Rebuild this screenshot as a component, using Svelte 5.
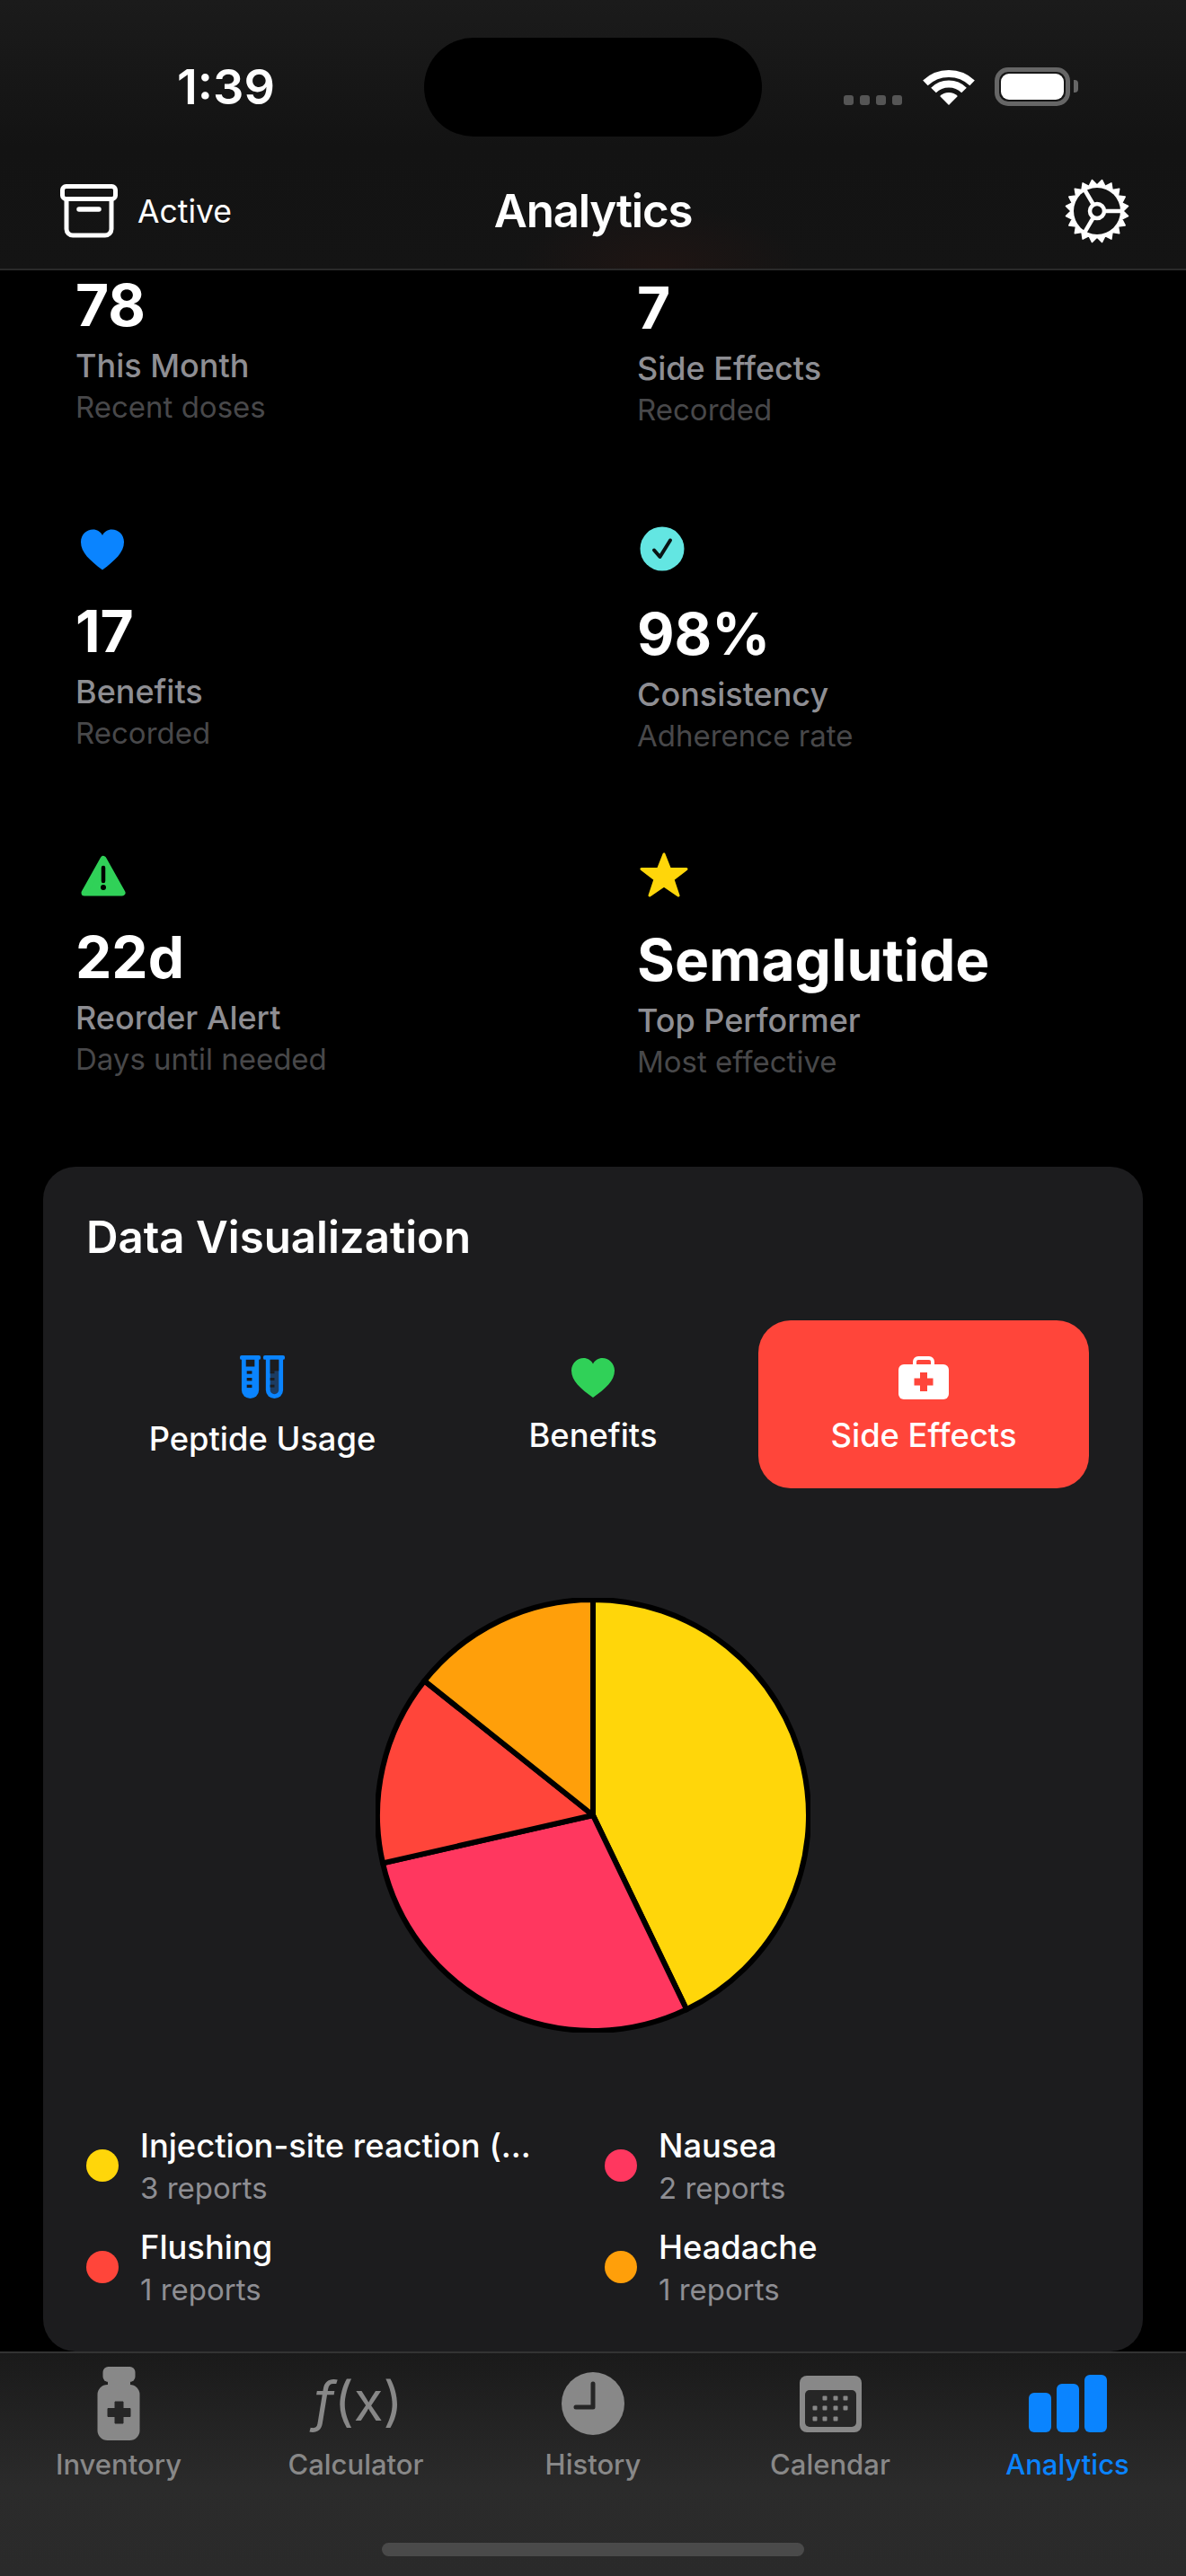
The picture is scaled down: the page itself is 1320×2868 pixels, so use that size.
<script>
  const cx = 242, cy = 242, r = 240;
  const slices = [
    { name: 'Injection-site reaction (...', count: 3, color: '#ffd60a' },
    { name: 'Nausea', count: 2, color: '#ff375f' },
    { name: 'Flushing', count: 1, color: '#ff453a' },
    { name: 'Headache', count: 1, color: '#ff9f0a' }
  ];
  const total = slices.reduce((a, s) => a + s.count, 0);
  let acc = 0;
  const arcs = slices.map((s) => {
    const a0 = (acc / total) * Math.PI * 2;
    acc += s.count;
    const a1 = (acc / total) * Math.PI * 2;
    const p = (a) => `${(cx + r * Math.sin(a)).toFixed(2)} ${(cy - r * Math.cos(a)).toFixed(2)}`;
    const large = a1 - a0 > Math.PI ? 1 : 0;
    return { color: s.color, d: `M${cx} ${cy}L${p(a0)}A${r} ${r} 0 ${large} 1 ${p(a1)}Z` };
  });

  const gearPts = [];
  const teeth = 20;
  for (let i = 0; i < teeth * 2; i++) {
    const rad = i % 2 ? 29 : 35;
    const a = (i / (teeth * 2)) * Math.PI * 2 + Math.PI / teeth;
    gearPts.push(`${(36 + rad * Math.cos(a)).toFixed(2)},${(36 + rad * Math.sin(a)).toFixed(2)}`);
  }
  const gear = gearPts.join(' ');

  const stats = [
    { icon: 'none', value: '78', label: 'This Month', sub: 'Recent doses' },
    { icon: 'none', value: '7', label: 'Side Effects', sub: 'Recorded', right: true },
    { icon: 'heart', value: '17', label: 'Benefits', sub: 'Recorded' },
    { icon: 'check', value: '98%', label: 'Consistency', sub: 'Adherence rate', right: true },
    { icon: 'warn', value: '22d', label: 'Reorder Alert', sub: 'Days until needed' },
    { icon: 'star', value: 'Semaglutide', label: 'Top Performer', sub: 'Most effective', right: true }
  ];
  const dotRows = [
    [917, 929, 940].map((x) => [x - 889, 25]),
    [906, 917, 929, 940].map((x) => [x - 889, 36]),
    [906, 917, 929].map((x) => [x - 889, 48])
  ].flat();
</script>

<div class="phone">
  <header class="top">
    <div class="status">
      <span class="time">1:39</span>
      <div class="island"></div>
      <div class="sys">
        <div class="signal"><i></i><i></i><i></i><i></i></div>
        <svg class="wifi" width="58" height="42" viewBox="0 0 58 42" aria-hidden="true">
          <g fill="none" stroke="#fff" stroke-width="8">
            <path d="M2.9 16.9A38 38 0 0 1 55.1 16.9" transform="translate(0 .5)" />
            <path d="M12 25.5A24 24 0 0 1 46 25.5" />
          </g>
          <path d="M19.1 32.1A14 14 0 0 1 38.9 32.1L29 42Z" fill="#fff" />
        </svg>
        <div class="battery"><div class="cell"></div></div>
        <div class="nub"></div>
      </div>
    </div>
    <div class="nav">
      <div class="nav-left">
        <svg width="66" height="60" viewBox="0 0 66 60" aria-hidden="true">
          <g fill="none" stroke="#fff" stroke-width="5" stroke-linecap="round" stroke-linejoin="round">
            <rect x="3.5" y="2.5" width="59" height="14" rx="4" />
            <path d="M8 17V50a7 7 0 0 0 7 7H51a7 7 0 0 0 7-7V17" />
            <path d="M22 28H44" stroke-width="5.5" />
          </g>
        </svg>
        <span class="active">Active</span>
      </div>
      <h1>Analytics</h1>
      <svg class="gear" width="72" height="72" viewBox="0 0 72 72" aria-hidden="true">
        <polygon points={gear} fill="#fff" stroke="#fff" stroke-width="1.5" stroke-linejoin="round" />
        <circle cx="36" cy="36" r="26" fill="#141414" />
        <g stroke="#fff" stroke-width="4.5" fill="none">
          <path d="M44 36H62" />
          <path d="M32 29L22 12" />
          <path d="M32 43L22 60" />
          <circle cx="36" cy="36" r="8" />
        </g>
      </svg>
    </div>
  </header>

  <main class="content">
    <section class="stats">
      {#each stats as s}
        <div class="stat" class:right={s.right}>
          <div class="stat-icon">
            {#if s.icon === 'heart'}
              <svg width="48" height="46" viewBox="0 0 48 46" aria-hidden="true"><path fill="#0a84ff" d="M24 45.5C10 35 0 26 0 14.5C0 6 6.5 .5 13.5 .5C18 .5 22 3 24 7C26 3 30 .5 34.5 .5C41.5 .5 48 6 48 14.5C48 26 38 35 24 45.5Z" /></svg>
            {:else if s.icon === 'check'}
              <svg width="50" height="50" viewBox="0 0 50 50" aria-hidden="true"><circle cx="25" cy="25" r="24.5" fill="#63e6e2" /><path d="M16 26.5L22.5 34L34 15.5" fill="none" stroke="#0a1414" stroke-width="4" stroke-linecap="round" stroke-linejoin="round" /></svg>
            {:else if s.icon === 'warn'}
              <svg width="50" height="46" viewBox="0 0 50 46" aria-hidden="true"><path fill="#30d158" stroke="#30d158" stroke-width="7" stroke-linejoin="round" d="M25 4.5L46 42H4Z" /><path d="M25 14V29" stroke="#000" stroke-width="4.5" stroke-linecap="round" /><circle cx="25" cy="36" r="3" fill="#000" /></svg>
            {:else if s.icon === 'star'}
              <svg width="54" height="50" viewBox="0 0 54 50" aria-hidden="true"><polygon fill="#ffd60a" stroke="#ffd60a" stroke-width="3" stroke-linejoin="round" points="27,2 33.5,18.5 52,18.5 37,30 43,48 27,37 11,48 17,30 2,18.5 20.5,18.5" /></svg>
            {/if}
          </div>
          <div class="value">{s.value}</div>
          <div class="label">{s.label}</div>
          <div class="sub">{s.sub}</div>
        </div>
      {/each}
    </section>

    <section class="card">
      <h2>Data Visualization</h2>
      <div class="segments">
        <div class="seg">
          <div class="seg-icon">
            <svg width="50" height="50" viewBox="0 0 52 52" aria-hidden="true">
              <g fill="#0a84ff">
                <rect x="0" y="0" width="24" height="5" rx="2" />
                <rect x="27" y="0" width="25" height="5" rx="2" />
                <path d="M2 4H22V40a10 10 0 0 1-20 0Z" />
                <path d="M30 4H50V40a10 10 0 0 1-20 0Z" />
              </g>
              <rect x="7" y="5" width="10" height="8" fill="#1c1c1e" />
              <path d="M35 5H45V40a5 5 0 0 1-10 0Z" fill="#1c3c62" />
              <path d="M35 5H45V18H35Z" fill="#1c1c1e" />
              <g fill="#1c1c1e">
                <rect x="8" y="18" width="6" height="3.5" />
                <rect x="8" y="26" width="6" height="3.5" />
                <rect x="8" y="34" width="6" height="3.5" />
                <rect x="35" y="18" width="5" height="3" />
                <rect x="35" y="26" width="5" height="3" />
                <rect x="35" y="34" width="5" height="3" />
              </g>
            </svg>
          </div>
          <span class="tube-label">Peptide Usage</span>
        </div>
        <div class="seg">
          <div class="seg-icon">
            <svg width="50" height="44" viewBox="0 0 48 44" aria-hidden="true"><path fill="#30d158" d="M24 44C10 34 0 25 0 14C0 6 6.5 0 13.5 0C18 0 22 2.5 24 6.5C26 2.5 30 0 34.5 0C41.5 0 48 6 48 14C48 25 38 34 24 44Z" /></svg>
          </div>
          <span>Benefits</span>
        </div>
        <div class="seg on">
          <div class="seg-icon">
            <svg width="56" height="48" viewBox="0 0 56 48" aria-hidden="true">
              <path d="M18 10V6a4 4 0 0 1 4-4H34a4 4 0 0 1 4 4V10" fill="none" stroke="#fff" stroke-width="4" />
              <rect x="0" y="9" width="56" height="39" rx="6" fill="#fff" />
              <path d="M24 18H32V24.5H38.5V32.5H32V39H24V32.5H17.5V24.5H24Z" fill="#ff453a" />
            </svg>
          </div>
          <span>Side Effects</span>
        </div>
      </div>

      <div class="pie">
        <svg width="484" height="484" viewBox="0 0 484 484" aria-label="Side effects pie chart">
          {#each arcs as a}
            <path d={a.d} fill={a.color} stroke="#000" stroke-width="6" stroke-linejoin="round" />
          {/each}
        </svg>
      </div>

      <div class="legend">
        {#each slices as s}
          <div class="item">
            <span class="dot" style="background:{s.color}"></span>
            <div class="item-text">
              <div class="item-name">{s.name}</div>
              <div class="item-sub">{s.count} reports</div>
            </div>
          </div>
        {/each}
      </div>
    </section>
  </main>

  <footer class="tabs">
    <div class="tabrow">
      <div class="tab">
        <div class="tab-icon">
          <svg width="48" height="84" viewBox="0 0 48 84" aria-hidden="true">
            <rect x="6.500" y="1" width="36" height="17" rx="6" fill="#888" />
            <rect x="12" y="15" width="25" height="12" fill="#888" />
            <rect x="0.500" y="21" width="47" height="62" rx="11" fill="#888" />
            <path d="M20 40H29V47.500H37V56.500H29V64H20V56.500H12V47.500H20Z" fill="#262626" stroke="#262626" stroke-width="1" stroke-linejoin="round" />
          </svg>
        </div>
        <span>Inventory</span>
      </div>
      <div class="tab">
        <div class="tab-icon"><span class="fx"><i>f</i>(x)</span></div>
        <span>Calculator</span>
      </div>
      <div class="tab">
        <div class="tab-icon">
          <svg width="70" height="70" viewBox="0 0 70 70" aria-hidden="true">
            <circle cx="35" cy="35" r="35" fill="#888" />
            <path d="M35 13V39H16" fill="none" stroke="#262626" stroke-width="5" stroke-linecap="round" stroke-linejoin="round" />
          </svg>
        </div>
        <span>History</span>
      </div>
      <div class="tab">
        <div class="tab-icon">
          <svg width="69" height="63" viewBox="0 0 69 63" aria-hidden="true">
            <rect width="69" height="63" rx="8" fill="#888" />
            <rect x="6" y="16" width="57" height="41" rx="5" fill="#262626" />
            {#each dotRows as d}
              <rect x={d[0] - 2.5} y={d[1] - 2.5} width="5" height="5" rx="1" fill="#888" />
            {/each}
          </svg>
        </div>
        <span>Calendar</span>
      </div>
      <div class="tab current">
        <div class="tab-icon">
          <svg width="87" height="64" viewBox="0 0 87 64" aria-hidden="true">
            <g fill="#0a84ff">
              <rect x="0" y="20" width="25" height="44" rx="6" />
              <rect x="31" y="10" width="25" height="54" rx="6" />
              <rect x="62" y="0" width="25" height="64" rx="6" />
            </g>
          </svg>
        </div>
        <span>Analytics</span>
      </div>
    </div>
    <div class="home"></div>
  </footer>
</div>

<style>
  :global(body) {
    margin: 0;
    background: #000;
  }
  .phone {
    width: 1320px;
    height: 2868px;
    display: flex;
    flex-direction: column;
    overflow: hidden;
    background: #000;
    color: #fff;
    font-family: Inter, "Liberation Sans", sans-serif;
  }
  .top {
    flex: none;
    height: 301px;
    box-sizing: border-box;
    border-bottom: 2px solid #2a2a2a;
    background: radial-gradient(160px 70px at 735px 300px, #1f1513, transparent), linear-gradient(#1b1b1b, #131313 55%, #141414);
    position: relative;
    z-index: 2;
  }
  .status {
    height: 152px;
    position: relative;
    display: flex;
    align-items: flex-start;
    padding: 0;
  }
  .time {
    font-size: 54px;
    font-weight: 600;
    line-height: 66px;
    margin: 64px 0 0 197px;
    width: 275px;
  }
  .island {
    width: 376px;
    height: 110px;
    margin-top: 42px;
    border-radius: 55px;
    background: #000;
  }
  .sys {
    display: flex;
    align-items: flex-start;
    margin: 75px 0 0 91px;
  }
  .signal {
    display: flex;
    gap: 7px;
    margin-top: 31px;
  }
  .signal i {
    width: 11px;
    height: 11px;
    border-radius: 3px;
    background: #555;
  }
  .wifi {
    margin-left: 23px;
  }
  .battery {
    width: 84px;
    height: 43px;
    margin-left: 22px;
    box-sizing: border-box;
    border: 5px solid #666;
    border-radius: 15px;
    padding: 2px;
  }
  .cell {
    height: 100%;
    border-radius: 9px;
    background: #fff;
  }
  .nub {
    width: 5px;
    height: 14px;
    margin: 14px 0 0 4px;
    border-radius: 0 4px 4px 0;
    background: #666;
  }
  .nav {
    position: relative;
    display: flex;
    align-items: center;
    justify-content: space-between;
    padding: 18px 63px 0 66px;
    height: 147px;
    box-sizing: border-box;
  }
  .nav-left {
    display: flex;
    align-items: center;
    gap: 21px;
  }
  .active {
    font-size: 35.5px;
    line-height: 44px;
    margin-top: 2px;
  }
  .nav h1 {
    position: absolute;
    left: 0;
    right: 0;
    margin: 0;
    text-align: center;
    font-size: 51px;
    font-weight: 600;
    letter-spacing: -1.2px;
    line-height: 62px;
  }
  .content {
    flex: 1;
    min-height: 0;
    display: flex;
    flex-direction: column;
    padding: 0 48px;
  }
  .stats {
    margin-top: -119px;
    display: grid;
    grid-template-columns: 600px 600px;
    column-gap: 25px;
    row-gap: 24px;
    align-items: start;
  }
  .stat {
    padding: 46px 36px 45.5px;
  }
  .stat-icon {
    height: 47px;
    margin: -2px 0 0 6px;
  }
  .stat.right .stat-icon {
    height: 49px;
    margin: -5.5px 0 0 3px;
  }
  .stat-icon svg {
    display: block;
  }
  .value {
    margin-top: 28px;
    font-size: 64px;
    font-weight: 700;
    line-height: 78px;
    white-space: nowrap;
  }
  .stat.right .value {
    margin-top: 32px;
  }
  .label {
    margin-top: 6px;
    font-size: 36px;
    font-weight: 500;
    line-height: 44px;
    color: #8e8e93;
  }
  .sub {
    margin-top: 4px;
    font-size: 33px;
    line-height: 40px;
    color: #48484a;
  }
  .card {
    margin-top: 52px;
    flex: 1;
    border-radius: 36px;
    background: #1c1c1e;
    padding: 48px 48px 48px;
    box-sizing: border-box;
    min-height: 0;
  }
  h2 {
    margin: 0;
    font-size: 49.2px;
    font-weight: 600;
    line-height: 60px;
  }
  .segments {
    display: grid;
    grid-template-columns: repeat(3, 368px);
    margin: 63px 0 0 12px;
  }
  .seg {
    height: 187px;
    box-sizing: border-box;
    border-radius: 36px;
    display: flex;
    flex-direction: column;
    align-items: center;
    padding-top: 38px;
    font-size: 36.3px;
    font-weight: 500;
    line-height: 44px;
  }
  .seg.on {
    background: #ff453a;
  }
  .seg-icon {
    height: 52px;
    display: flex;
    align-items: center;
    justify-content: center;
  }
  .seg-icon svg {
    display: block;
  }
  .seg span {
    margin-top: 16px;
  }
  .seg span.tube-label {
    margin-top: 20px;
  }
  .pie {
    display: flex;
    justify-content: center;
    margin-top: 121.5px;
  }
  .pie svg {
    display: block;
  }
  .legend {
    display: grid;
    grid-template-columns: 577px 1fr;
    row-gap: 24px;
    margin-top: 104px;
  }
  .item {
    display: flex;
    align-items: center;
    gap: 24px;
  }
  .dot {
    width: 36px;
    height: 36px;
    border-radius: 50%;
    flex: none;
  }
  .item-name {
    font-size: 36.3px;
    font-weight: 500;
    line-height: 44px;
  }
  .item-sub {
    margin-top: 5px;
    font-size: 33px;
    line-height: 40px;
    color: #8e8e93;
  }
  .tabs {
    flex: none;
    height: 250px;
    box-sizing: border-box;
    border-top: 2px solid #333;
    background: linear-gradient(#1a1a1a, #2b2b2b 60%, #2a2a2a);
    position: relative;
    z-index: 2;
  }
  .tabrow {
    display: grid;
    grid-template-columns: repeat(5, 264px);
    padding-top: 14px;
  }
  .tab {
    display: flex;
    flex-direction: column;
    align-items: center;
    font-size: 31px;
    font-weight: 500;
    line-height: 36px;
    color: #888;
  }
  .tab.current {
    color: #0a84ff;
  }
  .tab-icon {
    height: 84px;
    display: flex;
    align-items: center;
    justify-content: center;
    margin-bottom: 8px;
  }
  .tab-icon svg {
    display: block;
  }
  .fx {
    font-size: 60px;
    font-weight: 400;
    line-height: 72px;
    color: #888;
    white-space: nowrap;
    padding: 0 0 6px 6px;
  }
  .home {
    width: 470px;
    height: 15px;
    border-radius: 8px;
    background: #4a4a4a;
    margin: 69px auto 0;
  }
</style>
